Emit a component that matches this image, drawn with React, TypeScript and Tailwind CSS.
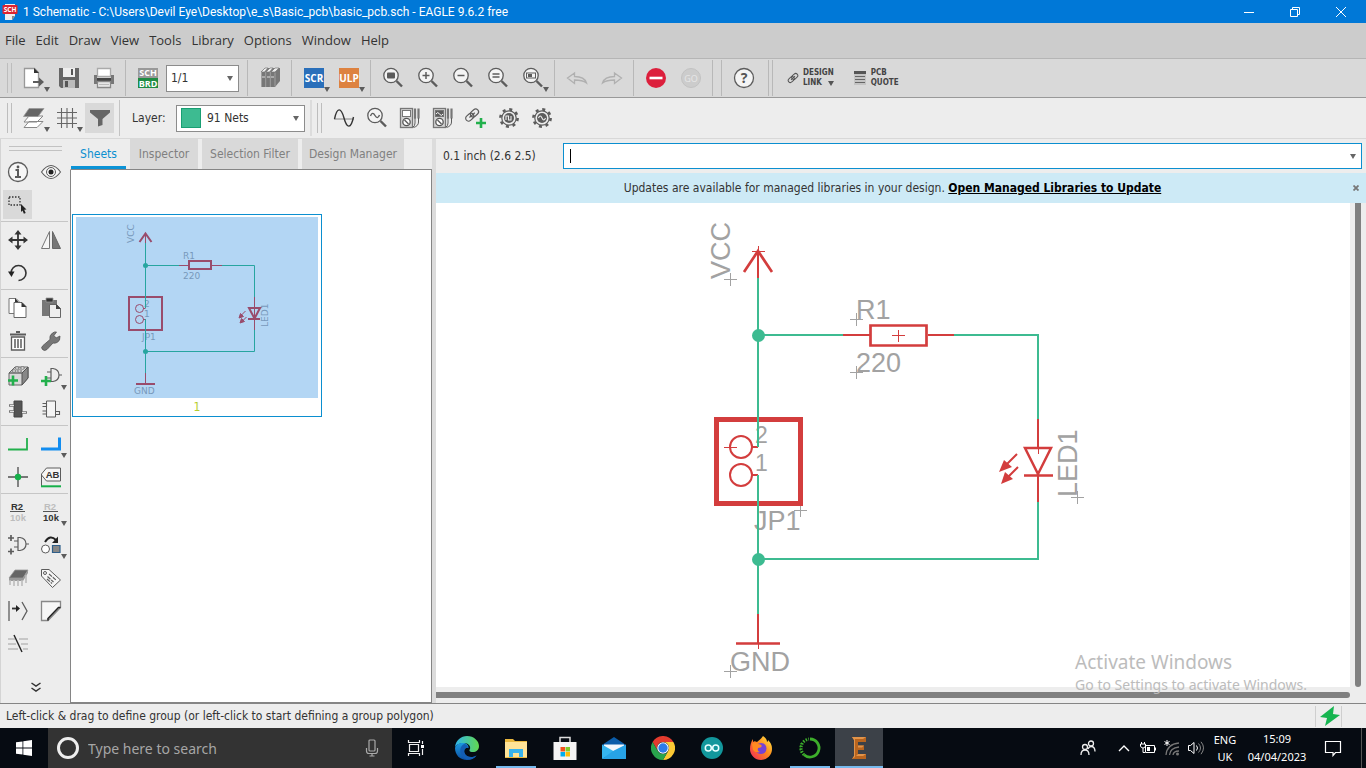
import React from "react";

type Kids = { children?: React.ReactNode };

const ui = "font-['DejaVu_Sans_Condensed','DejaVu_Sans',sans-serif]";

function Glyph({ children, size = "size-6" }: Kids & { size?: string }) {
  return (
    <svg viewBox="0 0 24 24" className={`${size} shrink-0`} fill="none" stroke="#5c5c5c" strokeWidth="1.3" aria-hidden="true">
      {children}
    </svg>
  );
}

function Tool({ label, icon, drop, box = "h-[38px] w-[35px]", active }: { label: string; icon: React.ReactNode; drop?: boolean; box?: string; active?: boolean }) {
  return (
    <button type="button" aria-label={label} className={`relative flex shrink-0 items-center justify-center ${box}`}>
      {active && <span className="absolute inset-x-[2px] inset-y-[2px] bg-[#d9d9d9]" />}
      <span className="relative flex">{icon}</span>
      {drop && (
        <svg viewBox="0 0 6 5" className="absolute top-[calc(50%+9px)] left-[calc(50%+10px)] h-[5px] w-[6px]" aria-hidden="true">
          <path d="M0 0h6L3 5z" fill="#5c5c5c" />
        </svg>
      )}
    </button>
  );
}

const Sep = () => <span className="mx-1 h-9 w-px shrink-0 bg-[#b8b8b8]" />;
const Grip = () => <span className="mx-[5px] h-[30px] w-[5px] shrink-0 border-x border-[#bdbdbd]" />;

function Lens({ children }: Kids) {
  return (
    <Glyph>
      <circle cx="10" cy="9.5" r="7.2" fill="#f4f4f4" />
      <path d="M15.5 15l5.5 5.5" strokeWidth="2.4" />
      {children}
    </Glyph>
  );
}

function Gear({ children }: Kids) {
  return (
    <Glyph>
      <circle cx="12" cy="12" r="8.6" strokeWidth="2.6" strokeDasharray="3 3.75" />
      <circle cx="12" cy="12" r="7.2" fill="#ededed" strokeWidth="1.2" />
      <circle cx="12" cy="12" r="5" fill="#5c5c5c" stroke="none" />
      <g stroke="#ededed" strokeWidth="1.1">{children}</g>
    </Glyph>
  );
}

function Meter({ wave }: { wave?: boolean }) {
  return (
    <Glyph>
      <rect x="2.5" y="2.5" width="12" height="19" fill="#d4d4d4" stroke="#777" />
      <rect x="4.5" y="4.5" width="8" height="6" fill={wave ? "#5c5c5c" : "#fff"} stroke="#777" strokeWidth="1" />
      {wave && <path d="M5 8q1.7-3 3.5 0t3.500 0" stroke="#fff" strokeWidth="1" />}
      <circle cx="8.5" cy="16" r="3.7" fill="#fff" stroke="#555" />
      <path d="M6.500 14l4 4" strokeWidth="1.5" />
      <path d="M17 2.500v10M20.500 2.500v10" strokeWidth="2.2" stroke="#777" />
      <path d="M17 12v5q0 3-2 4M20.500 12v4q0 4-5 5.500" strokeWidth="1" />
    </Glyph>
  );
}

const Chain = () => (
  <g transform="rotate(-42 9 9)">
    <rect x="0.5" y="5.8" width="10" height="6.4" rx="3.2" />
    <rect x="7.5" y="5.8" width="10" height="6.4" rx="3.2" />
    <path d="M5 9h8" />
  </g>
);

const Plus = ({ x, y }: { x: number; y: number }) => <path d={`M${x - 5} ${y}h10M${x} ${y - 5}v10`} stroke="#22b04c" strokeWidth="2.6" />;

const Badge = ({ text, fill }: { text: string; fill: string }) => (
  <Glyph>
    <rect x="2" y="2" width="20" height="20" fill={fill} stroke="none" />
    <text x="12" y="15.5" textAnchor="middle" fontSize="10" fontWeight="700" fontFamily="Open Sans, sans-serif" fill="#fff" stroke="none">{text}</text>
  </Glyph>
);

function Picker({ label, value, cls, swatch }: { label: string; value: string; cls: string; swatch?: boolean }) {
  return (
    <span className={`flex h-[27px] shrink-0 items-center border border-[#8c8c8c] bg-white ${cls}`}>
      {swatch && <span className="mr-[2px] ml-1 size-5 shrink-0 border border-[#199f73] bg-[#3dbb91]" />}
      <select aria-label={label} className="h-full min-w-0 flex-1 appearance-none bg-transparent pl-1 text-[12px] text-[#333] outline-none" defaultValue={value}>
        <option>{value}</option>
      </select>
      <svg viewBox="0 0 6 5" className="mr-[5px] h-[5px] w-[6px]" aria-hidden="true"><path d="M0 0h6L3 5z" fill="#666" /></svg>
    </span>
  );
}

function TitleBar() {
  return (
    <header className="flex h-[23px] shrink-0 items-center bg-[#0078d7] text-white">
      <svg viewBox="0 0 16 16" className="ml-[2px] size-4" aria-hidden="true">
        <path d="M3 0h10v12l-3 4H3z" fill="#eee" /><path d="M10 12h3l-3 4z" fill="#888" />
        <rect x="0.5" y="1" width="15" height="9" rx="1" fill="#dc2430" />
        <text x="8" y="8.2" textAnchor="middle" fontSize="6.5" fontWeight="700" fontFamily="Noto Sans, sans-serif" fill="#fff">SCH</text>
      </svg>
      <h1 className="ml-[5px] font-['Roboto',sans-serif] text-[12px] whitespace-nowrap">1 Schematic - C:\Users\Devil Eye\Desktop\e_s\Basic_pcb\basic_pcb.sch - EAGLE 9.6.2 free</h1>
      <div className="ml-auto flex">
        {[
          ["Minimize", "M1 6.5h10"],
          ["Restore", "M1.5 3.500h7v7h-7zM3.500 3V1.500h7v7H9"],
          ["Close", "M1 1l10 10M11 1L1 11"],
        ].map(([n, d]) => (
          <button key={n} type="button" aria-label={n} className="flex h-[21px] w-[46px] items-center justify-center">
            <svg viewBox="0 0 12 12" className="size-3" fill="none" stroke="#fff"><path d={d} /></svg>
          </button>
        ))}
      </div>
      <span className="w-[2px]" />
    </header>
  );
}

function MainBar() {
  return (
    <div className="flex h-[39px] shrink-0 items-center overflow-hidden border-b border-[#999] bg-[#d9d9d9]">
      <span className="mr-[-1px] ml-[2px] flex"><Grip /></span>
      <Tool label="New" drop icon={<Glyph><path d="M2.5 2.500h10l4 4v15h-14z" fill="#fff" stroke="#999" /><path d="M12 2v5h5z" fill="#333" stroke="none" /><path d="M11 16h7" strokeWidth="2" /><path d="M17 11.500l5 4.500-5 4.500z" fill="#5c5c5c" stroke="none" /></Glyph>} />
      <Tool label="Save" icon={<Glyph><path d="M2 2h20v20H4l-2-2z" fill="#666" stroke="none" /><path d="M6 2h12v9H6z" fill="#eee" stroke="none" /><path d="M6 14h12v8H6z" fill="#bbb" stroke="none" /><path d="M14 3h2v6h-2zM8 15h3v6H8z" fill="#555" stroke="none" /></Glyph>} />
      <Tool label="Print" icon={<Glyph><path d="M5.5 2.500h13v8h-13z" fill="#fff" stroke="#aaa" /><path d="M2 9h3v3h14V9h3v9H2z" fill="#777" stroke="none" /><path d="M5 12h14v3H5z" fill="#444" stroke="none" /><path d="M5.500 15.500h13v6h-13z" fill="#eee" stroke="#888" /><path d="M7 18.500h10" stroke="#bbb" /></Glyph>} />
      <Sep />
      <Tool label="Switch to board" icon={<Glyph><path d="M2 2h20v10H2z" fill="#999" stroke="none" /><path d="M2 12h20v10H2z" fill="#1f8c43" stroke="none" /><g fill="#fff" stroke="none" fontSize="9" fontWeight="700" fontFamily="Open Sans, sans-serif" textAnchor="middle"><text x="12" y="10">SCH</text><text x="12" y="20.5">BRD</text></g></Glyph>} />
      <Picker label="Sheet" value="1/1" cls="ml-px w-[73px]" />
      <span className="ml-1 flex"><Sep /></span>
      <Tool label="Libraries" icon={<Glyph><path d="M3 6l4-4h15v13l-5 6H3z" fill="#777" stroke="none" /><path d="M3 6l4-4h3L6.500 6zM8 6l4-4h3l-3.500 4zM13 6l4-4h4l-4 4z" fill="#eee" stroke="#777" strokeWidth=".7" /><path d="M3.500 6v15M7.700 6v15M12.300 6v15M17 6.500v14" stroke="#aaa" strokeWidth=".8" /><path d="M4 11h3M9 11h3M13 11h3" stroke="#ddd" strokeWidth="1" /></Glyph>} />
      <Sep />
      <Tool label="Run script" drop icon={<Badge text="SCR" fill="#2a6fba" />} />
      <Tool label="Run ULP" drop icon={<Badge text="ULP" fill="#dd8240" />} />
      <Sep />
      <Tool label="Zoom to fit" icon={<Lens><rect x="6" y="6.5" width="8" height="6" rx="1" fill="#5c5c5c" stroke="none" /></Lens>} />
      <Tool label="Zoom in" icon={<Lens><path d="M6.500 9.500h7M10 6v7" strokeWidth="1.5" /></Lens>} />
      <Tool label="Zoom out" icon={<Lens><path d="M6.500 9.500h7" strokeWidth="1.5" /></Lens>} />
      <Tool label="Redraw" icon={<Lens><path d="M6.500 8h7M6.500 11h7" /></Lens>} />
      <Tool label="Zoom select" drop icon={<Lens><rect x="5.5" y="7" width="9" height="5" strokeWidth="1" /><path d="M7 8h4v3H7z" fill="#5c5c5c" stroke="none" /></Lens>} />
      <Sep />
      <Tool label="Undo" icon={<Glyph><path d="M2.500 12l7-5v3.500q10 0 12 6.500-4-3-12-3v3.500z" stroke="#b0b0b0" /></Glyph>} />
      <Tool label="Redo" icon={<Glyph><path d="M21.500 12l-7-5v3.500q-10 0-12 6.500 4-3 12-3v3.500z" stroke="#b0b0b0" /></Glyph>} />
      <Sep />
      <Tool label="Stop" icon={<Glyph><circle cx="12" cy="12" r="10" fill="#dc1f3c" stroke="none" /><path d="M5.500 12h13" stroke="#fff" strokeWidth="2.6" /></Glyph>} />
      <Tool label="Go" icon={<Glyph><circle cx="12" cy="12" r="9.5" fill="#ccc" stroke="#c2c2c2" strokeWidth="1" /><text x="12" y="15.5" textAnchor="middle" fontSize="9" fontFamily="Noto Sans, sans-serif" fill="#e6e6e6" stroke="none">GO</text></Glyph>} />
      <Sep /><Sep />
      <Tool label="Help" icon={<Glyph><circle cx="12" cy="12" r="9.5" fill="#f4f4f4" /><text x="12" y="17" textAnchor="middle" fontSize="14" fontWeight="700" fontFamily="Noto Sans, sans-serif" fill="#555" stroke="none">?</text></Glyph>} />
      <span className="mr-[14px] ml-[7px] h-9 w-[5px] border-x border-[#b8b8b8]" />
      <button type="button" className={`flex items-center gap-1 text-left text-[8px] leading-[10px] font-bold text-[#444] ${ui}`}>
        <svg viewBox="0 0 18 18" className="size-3" fill="none" stroke="#555" strokeWidth="1.5" aria-hidden="true"><Chain /></svg>
        <span className="flex flex-col"><span>DESIGN</span><span>LINK</span></span>
        <svg viewBox="0 0 6 5" className="-ml-[10px] mt-[10px] h-[5px] w-[6px]" aria-hidden="true"><path d="M0 0h6L3 5z" fill="#555" /></svg>
      </button>
      <button type="button" className={`ml-5 flex items-center gap-[5px] text-left text-[8px] leading-[10px] font-bold text-[#444] ${ui}`}>
        <svg viewBox="0 0 12 14" className="h-[14px] w-3" aria-hidden="true"><path d="M0 0h12v14H0z" fill="#c4c4c4" /><path d="M0 0h12v3H0z" fill="#555" /><path d="M1 5.500h10M1 8.500h10M1 11.500h10" stroke="#666" /></svg>
        <span className="flex flex-col"><span>PCB</span><span>QUOTE</span></span>
      </button>
    </div>
  );
}

function LayerBar() {
  const b = "h-[34px] w-[33px]";
  return (
    <div className="flex h-[41px] shrink-0 items-center overflow-hidden border-b border-[#d8d8d8] bg-[#ededed]">
      <span className="ml-[2px] flex"><Grip /></span>
      <Tool label="Layer settings" box={b} drop icon={<Glyph><path d="M2 21.500l5-6h14l-6 6zM2 16l5-6h14l-6 6z" fill="#fff" stroke="#888" strokeWidth="1" /><path d="M1.500 10.500l5.500-8h15l-6 8z" fill="#666" stroke="#999" strokeWidth=".8" /></Glyph>} />
      <Tool label="Grid" box={b} drop icon={<Glyph><path d="M6.500 2v20M12 2v20M17.500 2v20M2 6.500h20M2 12h20M2 17.500h20" stroke="#666" strokeWidth="1.1" /></Glyph>} />
      <Tool label="Filter" box={b} active icon={<Glyph><path d="M2 4h20v2.500L14.500 13v6L10 20.500V13L2 6.500z" fill="#666" stroke="none" /></Glyph>} />
      <span className="mx-[3px] h-9 w-px bg-[#c4c4c4]" />
      <span className="ml-[9px] w-11 text-[12px] text-[#333]">Layer:</span>
      <Picker label="Layer" value="91 Nets" cls="w-[129px]" swatch />
      <span className="ml-[5px] h-9 w-[2px] bg-[#dcdcdc]" />
      <span className="flex"><Grip /></span>
      <Tool label="Simulate" box={b} icon={<Glyph><path d="M2 13h20" stroke="#777" strokeWidth=".9" /><path d="M2.500 13C5 1 9 1 12 12s7 11 9.500-1" stroke="#333" strokeWidth="1.4" /></Glyph>} />
      <Tool label="Probe" box={b} icon={<Lens><path d="M5.500 10q2-5 4.500-.5t4.500-.5" strokeWidth="1.4" /></Lens>} />
      <Tool label="Voltage probe" box={b} icon={<Meter />} />
      <Tool label="Phase probe" box={b} icon={<Meter wave />} />
      <Tool label="Add model" box={b} icon={<Glyph><g transform="translate(0 1) scale(.9)"><Chain /></g><Plus x={17} y={17} /></Glyph>} />
      <Tool label="Source setup" box={b} icon={<Gear><path d="M9 14v-4h2.500v4H14v-4" /></Gear>} />
      <Tool label="Waveform setup" box={b} icon={<Gear><path d="M8.500 12q1.700-4 3.500 0t3.500 0" /></Gear>} />
    </div>
  );
}

const R2 = ({ top, bottom }: { top: string; bottom: string }) => (
  <Glyph>
    <g fontFamily="Liberation Sans, sans-serif" fontWeight="700" fontSize="9.5" textAnchor="middle" stroke="none">
      <text x="11" y="10" fill={top}>R2</text><text x="12" y="20.5" fill={bottom}>10k</text>
    </g>
    <path d="M4 11.500h15" stroke="#555" strokeWidth="1" />
  </Glyph>
);

const Gate = () => <path d="M12 4.500h2q6 1 6 6.500t-6 6.500h-2zM20 11h3M8 8h4M8 14h4" strokeWidth="1.2" />;

const toolGroups: [string, React.ReactNode, boolean?][][] = [
  [
    ["Info", <Glyph><circle cx="12" cy="12" r="9.5" fill="#f6f6f6" /><path d="M9.500 10H12v6.500M9 17h6" strokeWidth="2" /><circle cx="12" cy="7" r="1.4" fill="#555" stroke="none" /></Glyph>],
    ["Show", <Glyph><path d="M2.500 12Q12-1 21.500 12 12 25 2.500 12z" fill="#f6f6f6" strokeWidth="1.1" /><circle cx="12" cy="12" r="4.5" strokeWidth="1" /><circle cx="12" cy="12" r="2.5" fill="#222" stroke="none" /></Glyph>],
    ["Group", <Glyph><rect x="3" y="4" width="11" height="8" strokeDasharray="1.5 1.5" stroke="#333" /><path d="M15 11l5.500 5.500-2.300.2 1.500 3.300-1.800.8-1.400-3.300L15 19z" fill="#222" stroke="none" /></Glyph>],
  ],
  [
    ["Move", <Glyph><path d="M4 12h16M12 4v16" stroke="#333" strokeWidth="1.8" /><path d="M12 2l3.500 4.500h-7zM12 22l3.500-4.500h-7zM2 12l4.500-3.500v7zM22 12l-4.500-3.500v7z" fill="#333" stroke="none" /></Glyph>],
    ["Mirror", <Glyph><path d="M10.500 3.500v17h-8z" fill="#f6f6f6" stroke="#777" strokeWidth="1" /><path d="M13.500 3.500v17h8z" fill="#777" stroke="#666" strokeWidth="1" /></Glyph>],
    ["Rotate", <Glyph><path d="M5 12a7.500 7.500 0 1 1 7.500 7.500" stroke="#333" strokeWidth="1.6" /><path d="M2 10.500h6.500L5.500 16z" fill="#222" stroke="none" /></Glyph>],
  ],
  [
    ["Copy", <Glyph><path d="M3 2.500h7l3 3v12H3z" fill="#fff" stroke="#777" strokeWidth="1" /><path d="M8 6.500h8l4 4v11H8z" fill="#fff" stroke="#666" strokeWidth="1" /><path d="M15.500 6v5h5zM9 2l3.500 4H9z" fill="#333" stroke="none" /></Glyph>],
    ["Paste", <Glyph><path d="M3 4h15v16H3z" fill="#777" stroke="none" /><path d="M7 2h7v4H7z" fill="#333" stroke="#999" strokeWidth=".8" /><path d="M10.500 8.500h7l4 4v9h-11z" fill="#eee" stroke="#666" strokeWidth="1" /><path d="M17 8v5h5z" fill="#444" stroke="none" /></Glyph>],
    ["Delete", <Glyph><path d="M5.500 8h13v13h-13z" fill="#fff" /><path d="M4 5.500h16M10 3h4" strokeWidth="1.8" /><path d="M9 10v9M12 10v9M15 10v9" strokeWidth="1.5" /></Glyph>],
    ["Change", <Glyph><path d="M3.500 20.500q-2-2 .5-4l7-6q-1-4 2.500-6.500 2-1.500 4-1l-2.500 3.500 2 2.500 4-2q.5 5-3 6.500-2 1-4 .5l-6 6.500q-2.500 2-4.500 0z" fill="#777" stroke="#555" strokeWidth=".8" /></Glyph>],
  ],
  [
    ["Add part", <Glyph><path d="M3 9l6-6h13v11l-6 7H3z" fill="#d8d8d8" stroke="#666" strokeWidth="1" /><path d="M16 9l6-6v11l-6 7z" fill="#888" stroke="#555" strokeWidth="1" /><path d="M3 9h13" /><g fill="#f4f4f4" strokeWidth=".8"><ellipse cx="8" cy="7" rx="2" ry="1.2" /><ellipse cx="13.5" cy="7" rx="2" ry="1.2" /><ellipse cx="11" cy="4" rx="2" ry="1.2" /><ellipse cx="16.5" cy="4" rx="2" ry="1.2" /></g><Plus x={7} y={16.5} /></Glyph>],
    ["Add gate", <Glyph><Gate /><Plus x={7} y={17} /></Glyph>, true],
    ["Replace", <Glyph><path d="M8 4h8v16H8z" fill="#555" stroke="#444" strokeWidth="1" /><path d="M3 8.500h5M3 14.500h5M16 15.500h5" stroke="#777" strokeWidth="2.5" /><path d="M4 8.500h4M4 14.500h4M16 15.500h4" stroke="#eee" strokeWidth=".9" /></Glyph>],
    ["Pin swap", <Glyph><path d="M7.500 4h9v16h-9z" fill="#f4f4f4" strokeWidth="1" /><path d="M3.500 6.500h4v3h-4M3.500 14h4v3h-4M16.500 14.500h4v3h-4" strokeWidth="1.1" /></Glyph>],
  ],
  [
    ["Net", <Glyph><path d="M2 17.500h19V6" stroke="#22b04c" strokeWidth="1.8" /></Glyph>],
    ["Bus", <Glyph><path d="M2 17h18.500V5.500" stroke="#128df0" strokeWidth="3" /></Glyph>, true],
    ["Junction", <Glyph><path d="M2 12h20M12 2v20" strokeWidth="1.8" stroke="#777" /><circle cx="12" cy="12" r="3.2" fill="#16b04a" stroke="none" /></Glyph>],
    ["Label", <Glyph><path d="M2.500 21V9l5-6h14v13h-14l-5-6" fill="#f6f6f6" strokeWidth="1" /><path d="M2 21.300h20" stroke="#16b04a" strokeWidth="2" /><text x="13.5" y="13" textAnchor="middle" fontSize="9.5" fontWeight="700" fontFamily="Liberation Sans, sans-serif" fill="#333" stroke="none">AB</text></Glyph>],
  ],
  [
    ["Name", <R2 top="#333" bottom="#bdbdbd" />],
    ["Value", <R2 top="#bdbdbd" bottom="#333" />, true],
    ["Gate swap", <Glyph><Gate /><path d="M2 5h6M5 2v6M2 18.500h6M5 15.500v6" strokeWidth="1.7" /></Glyph>],
    ["Replace symbol", <Glyph><circle cx="6.5" cy="16" r="4" fill="#fff" strokeWidth="1" /><path d="M13.500 12.500H21v7h-7.500z" fill="#888" stroke="#2f5f8a" strokeWidth="1.2" /><path d="M6 9q5-8 11-2" stroke="#222" strokeWidth="2" /><path d="M19 3.500V10h-6z" fill="#222" stroke="none" /></Glyph>, true],
    ["Package", <Glyph><path d="M3 12l6-8h13l-5 8z" fill="#666" stroke="#999" strokeWidth=".8" /><path d="M3 12h14v3H3zM17 12l5-8v3l-5 8z" fill="#999" stroke="none" /><path d="M4 14v5M8 14v6M12 14v6M16 14v6M20 9v8" stroke="#bbb" strokeWidth="1.6" /></Glyph>],
    ["Attribute", <Glyph><path d="M2.500 10V3.500H10L21.500 14l-8 7.500z" fill="#f6f6f6" strokeWidth="1" /><circle cx="6" cy="7" r="1.5" strokeWidth="1" /><path d="M10 8l7 6M8.500 10.500l6 5.500M8 13l5 4.500" strokeWidth="1.2" strokeDasharray="4 1" /></Glyph>],
    ["Split", <Glyph><path d="M3 2v20" strokeWidth="1.6" stroke="#777" /><path d="M16 3l5 9-5 9" /><path d="M6 9.500h5" stroke="#333" strokeWidth="1.8" /><path d="M10 6l4 3.500-4 3.500z" fill="#222" stroke="none" /></Glyph>],
    ["Miter", <Glyph><path d="M2.500 2.500h19v6L9 21.500H2.500z" fill="#f6f6f6" stroke="#888" /><path d="M21.500 8.500h-2L9 19.500v2" stroke="#222" strokeWidth="1.6" /></Glyph>],
    ["Slice", <Glyph><path d="M2 7h7M13 7h9M2 12h8M15 12h7M2 17h10M17 17h5" stroke="#bbb" strokeWidth="1.6" /><path d="M8 3l8 17" stroke="#222" strokeWidth="1.4" /></Glyph>],
  ],
];

function ToolColumn() {
  return (
    <nav aria-label="Drawing tools" className="flex w-[70px] shrink-0 flex-col border-l border-[#d4d4d4] bg-[#ededed]">
      <span className="mx-2 mt-[7px] mb-1 h-[5px] border-y border-[#c2c2c2]" />
      {toolGroups.map((g, i) => (
        <div key={i} className={`mr-[2px] grid grid-cols-[33px_33px] ${i ? "border-t border-[#c6c6c6] pt-px" : ""}`}>
          {g.map(([label, icon, drop]) => (
            <Tool key={label} label={label} icon={icon} drop={drop} active={label === "Group"} box="h-[33px] w-[33px]" />
          ))}
        </div>
      ))}
      <button type="button" aria-label="More tools" className="mx-auto mt-[22px]">
        <svg viewBox="0 0 12 10" className="h-[10px] w-3" fill="none" stroke="#333" strokeWidth="1.5"><path d="M1.500 1L6 4l4.500-3M1.500 6L6 9l4.500-3" /></svg>
      </button>
    </nav>
  );
}

function SheetPreview() {
  return (
    <svg viewBox="76 217 242 181" className="w-full" role="img" aria-label="Sheet 1 preview">
      <path d="M76 217h242v181H76z" fill="#b3d6f4" />
      <g fill="#7899bb" fontFamily="DejaVu Sans, sans-serif" fontSize="9">
        <text transform="translate(134 243) rotate(-90)">VCC</text>
        <text x="183" y="259">R1</text><text x="183" y="279">220</text>
        <text x="144" y="307">2</text><text x="144" y="317">1</text>
        <text x="142" y="340">JP1</text><text x="134" y="394">GND</text>
        <text transform="translate(268 327) rotate(-90)">LED1</text>
      </g>
      <g fill="none" stroke="#994c6c" strokeWidth="1">
        <path d="M145.500 233v10M179 265.500h9M211 265.500h11M254.500 297v33M145.500 373v10M143 308.500h2.500M143 319.500h2.500" />
        <path d="M139.500 242l6-8.500 6 8.500M189 261h22v8h-22zM129 297h33v33h-33zM136 384h19M248 319h12M249 308h11l-5.500 10.500z" strokeWidth="2" />
        <circle cx="139.5" cy="308.5" r="4" /><circle cx="139.5" cy="319.5" r="4" />
        <path d="M245.500 311l-5 5M246.500 317l-5 5" /><path d="M239 318l1.500-4.500 3 3zM240 323l1.500-4.500 3 3z" fill="#994c6c" />
      </g>
      <path d="M145.500 243v65M145.500 265.500H179M222 265.500h32.500V297M254.500 330v21.500h-109M145.500 319v54" fill="none" stroke="#27a5a0" />
      <circle cx="145.500" cy="265.500" r="2.5" fill="#27a5a0" /><circle cx="145.500" cy="351.500" r="2.5" fill="#27a5a0" />
    </svg>
  );
}

function SheetsPanel() {
  return (
    <section className="flex w-[362px] shrink-0 flex-col">
      <div role="tablist" className="flex h-[31px] gap-1 border-b border-l border-[#858585] border-l-transparent text-[12px]">
        <button role="tab" aria-selected="true" className="w-[55px] border-b-3 border-[#0b93d6] pt-[2px] text-[#0b8fd0]">Sheets</button>
        <button role="tab" aria-selected="false" className="w-[68px] bg-[#d9d9d9] text-[#808080]">Inspector</button>
        <button role="tab" aria-selected="false" className="w-[96px] bg-[#d9d9d9] text-[#808080]">Selection Filter</button>
        <button role="tab" aria-selected="false" className="w-[102px] bg-[#d9d9d9] text-[#808080]">Design Manager</button>
      </div>
      <div className="flex-1 border-x border-b border-[#858585] bg-white pt-11 pl-px">
        <figure className="w-[250px] border border-[#0b8fd0] px-[3px] pt-[2px] pb-px">
          <SheetPreview />
          <figcaption className="h-[17px] text-center text-[12px] leading-[18px] text-[#b5cc2e]">1</figcaption>
        </figure>
      </div>
    </section>
  );
}

function Schematic() {
  return (
    <svg viewBox="436 203 914 484" className="h-full w-full" role="img" aria-label="Schematic">
      <g fill="#a2a2a2" fontFamily="Liberation Sans, Arial, sans-serif" fontSize="27">
        <text transform="translate(730 279) rotate(-90)">VCC</text>
        <text x="856" y="319">R1</text><text x="856" y="372">220</text>
        <text x="755" y="443" fontSize="23">2</text><text x="755" y="471" fontSize="23">1</text>
        <text x="754" y="530">JP1</text><text x="730" y="671">GND</text>
        <text transform="translate(1077 497) rotate(-90)">LED1</text>
      </g>
      <path d="M724 279.500h13M730.500 273v13M850 319.500h13M856.500 313v13M850 372.500h13M856.500 366v13M794 510.500h13M800.500 504v13M1071 497.500h13M1077.500 491v13M724 671.500h13M730.500 665v13" stroke="#a2a2a2" fill="none" />
      <g stroke="#d33d3d" fill="none" strokeWidth="2">
        <path d="M758 250v28M843 335h27M928 335h27M1038 419v28M1038 475v27M758 614v29M751 447h7M751 475h7" />
        <path d="M744 272l14-21 14 21M736 643.500h44M870.500 325.500h56v20h-56z" strokeWidth="2.7" />
        <path d="M1025 448h26l-13 26zM1024 475.500h29" strokeWidth="2.5" />
        <path d="M716.500 419.500h84v84h-84z" strokeWidth="5" />
        <circle cx="741" cy="447" r="11" /><circle cx="741" cy="475" r="11" />
        <path d="M1017 454l-12 12M1018 467l-12 12" />
        <path d="M999 472l5-12 8 7zM1001 484l4-12 8 7z" fill="#d33d3d" stroke="none" />
        <path d="M752 251.500h13M758.500 246v12M892 335.500h13M898.500 330v12M724 447.500h13M1038.500 447v7M758.500 643v6" strokeWidth="1" />
      </g>
      <g stroke="#3dbb91" fill="none" strokeWidth="2">
        <path d="M758 278v169M758 335h85M954 335h84v84M1038 502v57H758M758 475v139" />
        <circle cx="758.500" cy="335.500" r="5.5" fill="#3dbb91" /><circle cx="758.500" cy="559.500" r="5.5" fill="#3dbb91" />
      </g>
    </svg>
  );
}

function Editor() {
  return (
    <main className="flex min-w-0 flex-1 flex-col">
      <div className="flex h-[34px] shrink-0 items-center pr-1 pl-[7px] text-[12px] text-[#333]">
        <label htmlFor="command" className="w-[120px] shrink-0">0.1 inch (2.6 2.5)</label>
        <div className="flex h-[26px] flex-1 items-center border border-[#0b8fd0] bg-white">
          <span className="ml-[6px] h-[14px] w-px bg-black" />
          <input id="command" className="min-w-0 flex-1 bg-transparent outline-none" />
          <svg viewBox="0 0 6 5" className="mr-[5px] h-[5px] w-[6px]" aria-hidden="true"><path d="M0 0h6L3 5z" fill="#666" /></svg>
        </div>
      </div>
      <div className="flex h-[30px] shrink-0 items-center bg-[#cdeaf6] text-[12px] text-[#333]">
        <p className="flex-1 pr-1 text-center">Updates are available for managed libraries in your design. <a href="#update" className="font-bold text-black underline">Open Managed Libraries to Update</a></p>
        <button type="button" aria-label="Dismiss" className="mr-[7px]"><svg viewBox="0 0 6 6" className="size-[6px]" stroke="#777" strokeWidth="1.8"><path d="M.5.5l5 5M5.500.5l-5 5" /></svg></button>
      </div>
      <div className="relative flex min-h-0 flex-1">
        <div className="min-w-0 flex-1 bg-white"><Schematic /></div>
        <div className="flex w-4 justify-center bg-[#ededed]"><span className="w-[6px] rounded-b bg-[#808080]" /></div>
        <div className="pointer-events-none absolute right-[59px] -bottom-[9px] z-10 font-['Noto_Sans',sans-serif] text-[#bcbcbc]">
          <p className="text-[19px] leading-6">Activate Windows</p>
          <p className="text-[14px] leading-[22px]">Go to Settings to activate Windows.</p>
        </div>
      </div>
      <div className="flex h-4 shrink-0 items-center pr-4"><span className="h-[6px] w-full rounded-r bg-[#808080]" /></div>
    </main>
  );
}

const Face = ({ children }: Kids) => <svg viewBox="0 0 24 24" className="size-6" aria-hidden="true">{children}</svg>;

const apps: [string, React.ReactNode, string?][] = [
  ["Edge", <Face><defs><linearGradient id="eg" x1="0" x2="1"><stop stopColor="#2fb5ee" /><stop offset="1" stopColor="#62d84e" /></linearGradient><linearGradient id="eb" y2="1" x2="0"><stop stopColor="#1c9be0" /><stop offset="1" stopColor="#0c4fa3" /></linearGradient></defs><path d="M0 11C1 4 6 0 12 0c7 0 12 5 12 10 0 4-3 6-6 6-4 0-4-1.500-3-3 1-3-2-6-6-6-4 0-7 1-9 4z" fill="url(#eg)" /><path d="M0 12C1 8 5 6.500 9 7c3 .5 5 3 4.500 5-3-1-5 2-4 5 1.500 4 7 5.500 12 2.500-2 3-6 4.500-9.500 4.500C5 24 0 19 0 12z" fill="url(#eb)" /><path d="M9 8c-4 2-5 8-2 12 2 3 5 4 8 3.500 3-.5 5-2 6.500-4-5 3-10.500 1.500-12-2.500C8.500 14 10 11 13 12c0-2-1.500-4-4-4z" fill="#135db4" /></Face>],
  ["File Explorer", <Face><path d="M1 3h8l2 2h12v17H1z" fill="#eab83e" /><path d="M1 6h22v15H1z" fill="#ffe397" /><path d="M5 21v-8h14v8h-4v-4H9v4z" fill="#38b3ec" /></Face>, "open"],
  ["Store", <Face><path d="M7 7V1.500h10V7" fill="none" stroke="#ddd" strokeWidth="1.5" /><path d="M.5 6h23v18H.5z" fill="#f4f4f4" /><path d="M7.500 11H12v4.500H7.500z" fill="#f1511b" /><path d="M12.500 11H17v4.500h-4.500z" fill="#80cc28" /><path d="M7.500 16H12v4.500H7.500z" fill="#00adef" /><path d="M12.500 16H17v4.500h-4.500z" fill="#fbbc09" /></Face>],
  ["Mail", <Face><path d="M0 9L12 1l12 8v5H0z" fill="#0b5da9" /><path d="M2 8.500h20v5L12 18 2 13.500z" fill="#f3f8fc" /><path d="M0 8.500L13 16 0 23z" fill="#35b5ef" /><path d="M24 8.500v14.500H0l11-8z" fill="#27a3e6" /></Face>],
  ["Chrome", <Face><path d="M1.600 6A12 12 0 0 1 22.400 6H12a6 6 0 0 0-5.200 9z" fill="#e33b2e" /><path d="M22.400 6A12 12 0 0 1 12 24l5.200-9A6 6 0 0 0 12 6z" fill="#fcc934" /><path d="M12 24A12 12 0 0 1 1.600 6l5.200 9a6 6 0 0 0 10.400 0z" fill="#29a44c" /><circle cx="12" cy="12" r="5.8" fill="#fff" /><circle cx="12" cy="12" r="4.7" fill="#2d7bea" /></Face>],
  ["Arduino", <Face><circle cx="12" cy="12" r="11" fill="#12979c" /><g fill="none" stroke="#e8ffff" strokeWidth="1.5"><circle cx="8.3" cy="12" r="3" /><circle cx="15.700" cy="12" r="3" /></g></Face>],
  ["Firefox", <Face><defs><linearGradient id="ff" x1="1" x2="0" y2="1"><stop stopColor="#fff04a" /><stop offset=".45" stopColor="#ff8a1c" /><stop offset="1" stopColor="#f0235d" /></linearGradient></defs><path d="M14 0c3 2 4 4 4 6 1-1 1-1 1-2 4 4 4 7 4 9A11 11 0 0 1 1 13C1 9 2 6 4 3v3c1-1 2-1 4 0 2-2 4-3 6-6z" fill="url(#ff)" /><circle cx="12" cy="12.5" r="5.5" fill="#7542d5" /><path d="M3 8q3-3 6 0 3 0 4 2-1 2-4 2-1 3 2 4-5 1-7-2z" fill="#ff8a20" /></Face>],
  ["Anaconda", <Face><g fill="none" stroke="#3dae2b"><path d="M12 3a9 9 0 1 1-6 15.700" strokeWidth="2.8" /><path d="M6 18.700a9 9 0 0 1 5-15.600" strokeWidth="3" strokeDasharray="1.5 1.3" /><path d="M3.500 17a10 10 0 0 1 0-10" strokeWidth="1.3" strokeDasharray="1.3 1.6" /></g></Face>, "open"],
  ["EAGLE", <Face><path d="M5 1h14v5h-8v3.500h6v4.500h-6v4h8v5H5l2-3V4z" fill="#b9651f" /><path d="M5 1h14l-3 2H8v18l-3 2 2-3V4zM11 9.500h6l-2 2h-4zM11 18h8l-3 2H9z" fill="#e2944a" /></Face>, "active"],
];

function Taskbar() {
  return (
    <footer className="flex h-10 shrink-0 items-center bg-[#060b12] font-['Noto_Sans',sans-serif] text-white">
      <button type="button" aria-label="Start" className="flex h-full w-12 items-center justify-center"><svg viewBox="0 0 16 16" className="size-4" fill="#fff"><path d="M0 2.300L6.500 1.400v6.200H0zM7.300 1.300L16 0v7.600H7.300zM0 8.400h6.500v6.200L0 13.700zM7.300 8.400H16V16l-8.700-1.300z" /></svg></button>
      <div className="flex h-full w-[344px] items-center bg-[#333] pr-3">
        <span className="ml-[9px] size-[22px] rounded-full border-3 border-[#eee]" />
        <input aria-label="Search" placeholder="Type here to search" className="ml-[9px] min-w-0 flex-1 bg-transparent text-[14px] outline-none placeholder:text-[#a6a6a6]" />
        <svg viewBox="0 0 16 18" className="h-[18px] w-4" fill="none" stroke="#aaa" strokeWidth="1.2"><rect x="5" y="1" width="6" height="11" rx="1" /><path d="M2.500 9v3q0 2.500 2.500 2.500h6q2.500 0 2.500-2.500V9M8 14.500V17M5.500 17h5" /></svg>
      </div>
      <button type="button" aria-label="Task view" className="flex h-full w-12 items-center justify-center"><svg viewBox="0 0 18 16" className="h-4 w-[18px]" fill="none" stroke="#eee" strokeWidth="1.2"><path d="M2.500 4.500h9v7h-9zM1.500 0v2.500h11V0M1.500 16v-2.500h11V16M15.500 1v3M15.500 9v6" /><path d="M14 5h3v3h-3z" fill="#fff" stroke="none" /></svg></button>
      <div className="ml-[3px] flex h-full gap-px">
        {apps.map(([n, icon, state]) => (
          <button key={n} type="button" aria-label={n} className={`flex h-full w-12 flex-col items-center justify-center ${state === "active" ? "bg-[#3c4148]" : ""}`}>
            <span className="mt-auto">{icon}</span>
            <span className={`mt-[6px] h-[2px] ${state === "active" ? "w-12" : "w-10"} ${state ? "bg-[#76b9ed]" : ""}`} />
          </button>
        ))}
      </div>
      <div className="ml-auto flex h-full items-center text-center text-[11px]">
        <svg viewBox="0 0 16 16" className="mr-[22px] size-4" fill="none" stroke="#eee" strokeWidth="1.3"><circle cx="5" cy="7" r="2.5" /><circle cx="11" cy="3.5" r="2.5" /><path d="M1 15q0-5 4-5t4 5M8 9q1-2.500 3-2.500 4 0 4 5" /></svg>
        <svg viewBox="0 0 12 8" className="mr-[10px] h-2 w-3" fill="none" stroke="#fff" strokeWidth="1.4"><path d="M1 7l5-5 5 5" /></svg>
        <svg viewBox="0 0 16 14" className="mr-2 h-[14px] w-4" fill="none" stroke="#fff"><path d="M5.500 4.500h9v7h-9z" /><path d="M7 6h3v4H7zM15 6.500h1v3h-1z" fill="#fff" stroke="none" /><path d="M1.500 1v2M4.500 1v2M.5 3h5v2Q5 7 3 7T.5 5zM3 7v4.500h2" /></svg>
        <svg viewBox="0 0 16 16" className="mr-2 size-4" fill="none" stroke="#777" strokeWidth="1.3"><path d="M2 15Q3 4 15 3M5.500 15Q6 8 15 7M9 15q.5-4 6-4" /><circle cx="13.5" cy="14" r="1.5" fill="#777" stroke="none" /><path d="M3 0v6M.5 1.500l5 3M5.500 1.500l-5 3" stroke="#fff" strokeWidth="1" /></svg>
        <svg viewBox="0 0 16 14" className="h-[14px] w-4" fill="none" stroke="#fff"><path d="M.5 4.500h2l3.500-3v11l-3.500-3h-2z" /><path d="M8.500 4.500q2 2.500 0 5" /><path d="M10.500 2.500q4 4.500 0 9M13 .8q5 6 0 12.400" stroke="#888" /></svg>
        <span className="ml-[2px] w-[38px] text-[11px] leading-[17px]">ENG<br />UK</span>
        <span className="w-[66px] text-[11px] leading-[18px]"><time>15:09</time><br /><time>04/04/2023</time></span>
        <button type="button" aria-label="Notifications" className="flex w-[46px] justify-center"><svg viewBox="0 0 18 18" className="size-[18px]" fill="none" stroke="#fff" strokeWidth="1.2"><path d="M1.500 2.500h15v11h-5L9 16.500v-3H1.500z" /></svg></button>
        <span className="mr-1 ml-[5px] h-full w-px bg-[#555]" />
      </div>
    </footer>
  );
}

export default function App() {
  return (
    <div className={`flex h-screen min-h-[640px] flex-col bg-[#ededed] ${ui}`}>
      <TitleBar />
      <nav aria-label="Menu" className="flex h-9 shrink-0 items-center gap-[10px] border-b border-[#b5b5b5] bg-[#ccc] pl-[5px] font-['Open_Sans',sans-serif] text-[13px] text-[#333]">
        {["File", "Edit", "Draw", "View", "Tools", "Library", "Options", "Window", "Help"].map((m) => <button key={m} type="button">{m}</button>)}
      </nav>
      <MainBar />
      <LayerBar />
      <div className="flex min-h-0 flex-1">
        <ToolColumn />
        <SheetsPanel />
        <span className="w-1 shrink-0 bg-[#dcdcdc]" />
        <Editor />
      </div>
      <div className="flex h-[25px] shrink-0 items-center border-t border-[#858585] pl-[6px] text-[12px] text-[#333]">
        <p className="flex-1">Left-click &amp; drag to define group (or left-click to start defining a group polygon)</p>
        <span className="mr-6 flex h-[21px] items-center border-x border-[#cfcfcf] pr-px pl-1">
          <svg viewBox="0 0 20 20" className="size-5" aria-hidden="true"><path d="M14 0L0 11l7 1-2 8L20 9l-7-1z" fill="#16b550" /></svg>
        </span>
      </div>
      <Taskbar />
    </div>
  );
}
